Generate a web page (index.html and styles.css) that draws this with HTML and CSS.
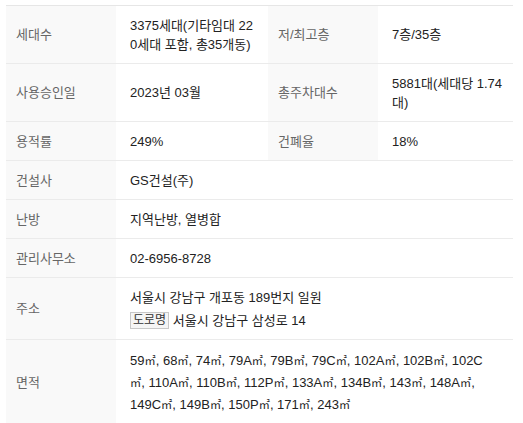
FILE: index.html
```html
<!DOCTYPE html>
<html lang="ko">
<head>
<meta charset="utf-8">
<link rel="stylesheet" href="styles.css">
</head>
<body>
<table class="info">
  <colgroup>
    <col class="c-label"><col class="c-val1"><col class="c-label"><col class="c-val2">
  </colgroup>
  <tbody>
    <tr>
      <th>세대수</th>
      <td>3375세대(기타임대 220세대 포함, 총35개동)</td>
      <th>저/최고층</th>
      <td>7층/35층</td>
    </tr>
    <tr>
      <th>사용승인일</th>
      <td>2023년 03월</td>
      <th>총주차대수</th>
      <td>5881대(세대당 1.74대)</td>
    </tr>
    <tr>
      <th>용적률</th>
      <td>249%</td>
      <th>건폐율</th>
      <td>18%</td>
    </tr>
    <tr>
      <th>건설사</th>
      <td colspan="3">GS건설(주)</td>
    </tr>
    <tr>
      <th>난방</th>
      <td colspan="3">지역난방, 열병합</td>
    </tr>
    <tr>
      <th>관리사무소</th>
      <td colspan="3">02-6956-8728</td>
    </tr>
    <tr>
      <th>주소</th>
      <td colspan="3" class="addr">
        <div>서울시 강남구 개포동 189번지 일원</div>
        <div class="road"><span class="tag">도로명</span> 서울시 강남구 삼성로 14</div>
      </td>
    </tr>
    <tr>
      <th>면적</th>
      <td colspan="3" class="area">59<span class="u">㎡</span>, 68<span class="u">㎡</span>, 74<span class="u">㎡</span>, 79A<span class="u">㎡</span>, 79B<span class="u">㎡</span>, 79C<span class="u">㎡</span>, 102A<span class="u">㎡</span>, 102B<span class="u">㎡</span>, 102C<span class="u">㎡</span>, 110A<span class="u">㎡</span>, 110B<span class="u">㎡</span>, 112P<span class="u">㎡</span>, 133A<span class="u">㎡</span>, 134B<span class="u">㎡</span>, 143<span class="u">㎡</span>, 148A<span class="u">㎡</span>, 149C<span class="u">㎡</span>, 149B<span class="u">㎡</span>, 150P<span class="u">㎡</span>, 171<span class="u">㎡</span>, 243<span class="u">㎡</span></td>
    </tr>
  </tbody>
</table>
</body>
</html>
```
FILE: styles.css
```css
html, body {
  margin: 0;
  padding: 0;
  background: #fff;
}
body {
  font-family: "Liberation Sans", "Noto Sans CJK KR", sans-serif;
  font-size: 13px;
  color: #222;
}
.info {
  margin: 5px 0 0 6px;
  width: 507px;
  border-collapse: collapse;
  table-layout: fixed;
  border-top: 1px solid #e6e6e6;
}
.c-label { width: 110px; }
.c-val1 { width: 152px; }
.c-val2 { width: 135px; }
.info tr {
  border-bottom: 1px solid #ebebeb;
}
.info th {
  background: #f9f9f9;
  color: #666;
  font-weight: normal;
  text-align: left;
  padding: 9.5px 10px;
  line-height: 19px;
  vertical-align: middle;
}
.info td {
  padding: 9.5px 10px 9.5px 14px;
  line-height: 19px;
  vertical-align: middle;
  word-break: break-all;
  color: #222;
}
.addr {
  padding-top: 9px;
  padding-bottom: 9px;
}
.road {
  margin-top: 4px;
}
.tag {
  display: inline-block;
  font-size: 12px;
  line-height: 15px;
  padding: 0 2px;
  border: 1px solid #c8c8c8;
  background: #f5f5f5;
  color: #333;
  vertical-align: 1px;
}
.info td.area {
  line-height: 21px;
  padding-right: 17px;
  word-break: normal;
}
.u {
  font-size: 11.2px;
}
```
